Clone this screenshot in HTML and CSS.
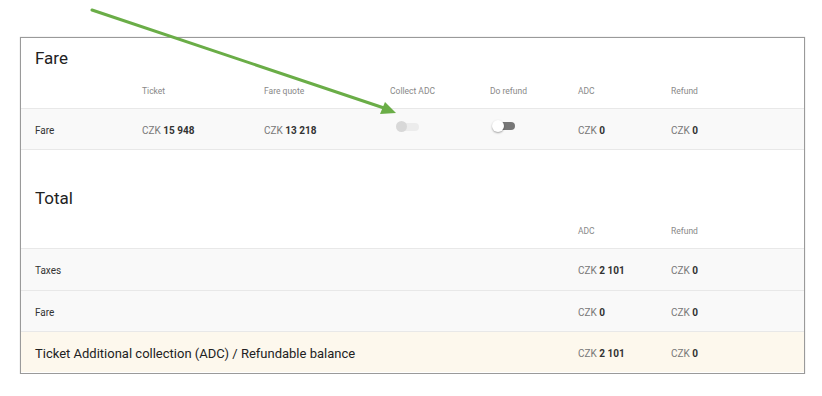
FILE: index.html
```html
<!DOCTYPE html>
<html lang="en">
<head>
    <meta charset="UTF-8">
    <title>Refund calculation</title>
    <link rel="stylesheet" href="styles.css">
</head>
<body>
    <div class="panel">
        <!-- Fare section -->
        <div class="section">
            <h2 class="section-title">Fare</h2>
            <div class="grid head">
                <span></span>
                <span>Ticket</span>
                <span>Fare quote</span>
                <span>Collect ADC</span>
                <span>Do refund</span>
                <span>ADC</span>
                <span>Refund</span>
            </div>
            <div class="grid row">
                <span>Fare</span>
                <span><span class="cur">CZK</span> <b>15 948</b></span>
                <span><span class="cur">CZK</span> <b>13 218</b></span>
                <span><span class="toggle disabled"></span></span>
                <span><span class="toggle"></span></span>
                <span><span class="cur">CZK</span> <b>0</b></span>
                <span><span class="cur">CZK</span> <b>0</b></span>
            </div>
        </div>

        <!-- Total section -->
        <div class="section total">
            <h2 class="section-title">Total</h2>
            <div class="grid head">
                <span></span><span></span><span></span><span></span><span></span>
                <span>ADC</span>
                <span>Refund</span>
            </div>
            <div class="grid row">
                <span>Taxes</span>
                <span></span><span></span><span></span><span></span>
                <span><span class="cur">CZK</span> <b>2 101</b></span>
                <span><span class="cur">CZK</span> <b>0</b></span>
            </div>
            <div class="grid row short">
                <span>Fare</span>
                <span></span><span></span><span></span><span></span>
                <span><span class="cur">CZK</span> <b>0</b></span>
                <span><span class="cur">CZK</span> <b>0</b></span>
            </div>
            <div class="grid row short balance">
                <span class="balance-label">Ticket Additional collection (ADC) / Refundable balance</span>
                <span><span class="cur">CZK</span> <b>2 101</b></span>
                <span><span class="cur">CZK</span> <b>0</b></span>
            </div>
        </div>
    </div>

    <!-- annotation arrow -->
    <svg class="arrow" width="822" height="396" viewBox="0 0 822 396">
        <line x1="92" y1="10" x2="384" y2="108" stroke="#6aad47" stroke-width="3" stroke-linecap="round"/>
        <polygon points="396,113 380,114 385,102" fill="#6aad47"/>
    </svg>
</body>
</html>
```

FILE: styles.css
```css
body {
    margin: 0;
    background-color: white;
    font-family: Roboto, "Liberation Sans", sans-serif;
    color: #333;
}

.panel {
    margin: 37px 0 0 20px;
    width: 785px;
    height: 337px;
    box-sizing: border-box;
    border: 1px solid #9a9a9a;
    box-shadow: 0 0 1px #bbb;
    overflow: hidden;
}

.section-title {
    margin: 0;
    padding: 8px 14px 0;
    height: 24px;
    line-height: 24px;
    font-size: 17px;
    font-weight: normal;
    color: #222;
}

.total {
    margin-top: 28px;
}

.grid {
    display: grid;
    grid-template-columns: 107px 122px 126px 100px 88px 93px 1fr;
    padding-left: 14px;
}

.head {
    height: 38px;
    box-sizing: border-box;
    padding-bottom: 11px;
    align-items: end;
    font-size: 8.5px;
    line-height: 12px;
    color: #888;
}

.row {
    height: 42px;
    box-sizing: border-box;
    border-top: 1px solid #e8e8e8;
    align-items: center;
    font-size: 10px;
    background-color: #f9f9f9;
}

.row.short {
    height: 41px;
}

.row > span {
    padding-top: 2px;
}

.section > .row:last-child {
    border-bottom: 1px solid #e8e8e8;
}

.total > .row:last-child {
    border-bottom: none;
}

.cur {
    color: #777;
}

.row b {
    color: #333;
}

.balance {
    background-color: #fdf8ed;
}

.balance-label {
    grid-column: 1 / 6;
    font-size: 13px;
    color: #222;
}

/* switches */
.toggle {
    position: relative;
    display: inline-block;
    width: 22px;
    height: 8px;
    border-radius: 4px;
    background-color: #777;
    margin: -10px 0 0 3px;
    vertical-align: middle;
}

.toggle::after {
    content: "";
    position: absolute;
    left: -1px;
    top: -2px;
    width: 12px;
    height: 12px;
    border-radius: 50%;
    background-color: white;
    box-shadow: 0 1px 2px rgba(0,0,0,0.35);
}

.toggle.disabled {
    width: 22px;
    background-color: #ececec;
    margin-top: -7px;
    margin-left: 7px;
}

.toggle.disabled::after {
    left: -1px;
    top: -2px;
    width: 11px;
    height: 11px;
    background-color: #d8d8d8;
    box-shadow: none;
}

.arrow {
    position: absolute;
    left: 0;
    top: 0;
    pointer-events: none;
}
```
